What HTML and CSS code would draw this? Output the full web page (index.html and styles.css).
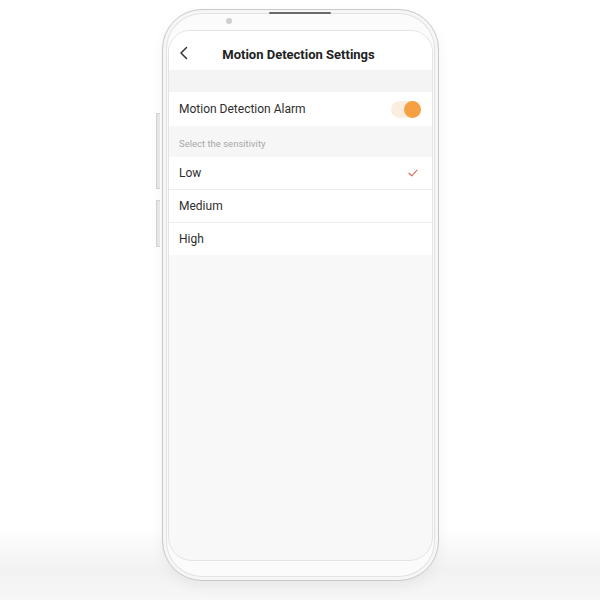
FILE: index.html
```html
<!DOCTYPE html>
<html>
<head>
<meta charset="utf-8">
<link rel="stylesheet" href="styles.css">
</head>
<body>
<div class="stage">
  <div class="phone">
    <span class="side-btn side-btn-1"></span>
    <span class="side-btn side-btn-2"></span>
    <span class="camera"></span>
    <span class="speaker"></span>
    <div class="screen">
      <div class="header">
        <svg class="back" width="10" height="14" viewBox="0 0 10 14"><path d="M7.5 1.5 L2 7 L7.5 12.5" fill="none" stroke="#333" stroke-width="1.5" stroke-linecap="round" stroke-linejoin="round"/></svg>
        <div class="title">Motion Detection Settings</div>
      </div>
      <div class="gap"></div>
      <div class="row alarm">
        <span class="label">Motion Detection Alarm</span>
        <span class="toggle"><span class="knob"></span></span>
      </div>
      <div class="section">Select the sensitivity</div>
      <div class="row opt">
        <span class="label">Low</span>
        <svg class="check" width="10" height="8" viewBox="0 0 10 8"><path d="M1 4.2 L3.8 6.8 L9 1.2" fill="none" stroke="#d9735a" stroke-width="1.2" stroke-linecap="round" stroke-linejoin="round"/></svg>
      </div>
      <div class="row opt">
        <span class="label">Medium</span>
      </div>
      <div class="row opt last">
        <span class="label">High</span>
      </div>
    </div>
  </div>
</div>
</body>
</html>
```

FILE: styles.css
```css
html, body {
  margin: 0;
  padding: 0;
}
body {
  width: 600px;
  height: 600px;
  overflow: hidden;
  font-family: Roboto, "Liberation Sans", sans-serif;
  background: linear-gradient(to bottom, #ffffff 0%, #ffffff 88%, #f2f2f2 95%, #f7f7f7 100%);
}
.stage {
  height: 600px;
  display: flex;
  justify-content: center;
  padding-top: 9px;
  box-sizing: border-box;
}
.phone {
  position: relative;
  width: 277px;
  height: 572px;
  box-sizing: border-box;
  border: 1.5px solid #c9c9c9;
  border-radius: 40px;
  background: #fbfbfb;
  box-shadow: inset 0 0 0 3px #f6f6f6, inset 0 0 0 4px #e2e2e2, 0 6px 14px rgba(0,0,0,0.05);
  padding: 20px 5px 19px 5px;
  margin-left: 1px;
}
.side-btn {
  position: absolute;
  left: -7px;
  width: 3px;
  background: #e6e6e6;
  border: 1px solid #d2d2d2;
  border-right: none;
  border-radius: 1px 0 0 1px;
}
.side-btn-1 { top: 103px; height: 74px; }
.side-btn-2 { top: 190px; height: 45px; }
.camera {
  position: absolute;
  top: 8px;
  left: 63px;
  width: 6px;
  height: 6px;
  border-radius: 50%;
  background: #cfcfcf;
}
.speaker {
  position: absolute;
  top: 2px;
  left: 106px;
  width: 62px;
  height: 2px;
  background: #6a6a6a;
  border-radius: 1px;
}
.screen {
  height: 100%;
  box-sizing: border-box;
  border: 1px solid #e4e4e4;
  border-radius: 22px 22px 24px 24px;
  background: #f8f8f8;
  overflow: hidden;
}
.header {
  height: 39px;
  background: #ffffff;
  display: flex;
  align-items: center;
  position: relative;
  padding-left: 10px;
}
.back {
  margin-top: 4px;
}
.title {
  position: absolute;
  left: 0;
  right: 0;
  top: 16px;
  text-align: center;
  font-size: 13px;
  font-weight: 700;
  color: #222;
  padding-right: 4px;
}
.gap {
  height: 22px;
  background: #f4f4f4;
}
.row {
  background: #fff;
  display: flex;
  align-items: center;
  justify-content: space-between;
  padding: 0 10px 0 10px;
  color: #2e2e2e;
  font-size: 12px;
}
.alarm {
  height: 34px;
}
.toggle {
  width: 30px;
  height: 17px;
  border-radius: 9px;
  background: #fbeedf;
  position: relative;
  margin-right: 1px;
}
.knob {
  position: absolute;
  right: 0;
  top: 0;
  width: 17px;
  height: 17px;
  border-radius: 50%;
  background: #f5a043;
}
.section {
  height: 31px;
  box-sizing: border-box;
  padding: 12px 0 0 10px;
  font-size: 9.5px;
  color: #a8a8a8;
  background: #f6f6f6;
}
.opt {
  height: 32px;
  border-bottom: 1px solid #ededed;
}
.opt.last {
  border-bottom: none;
  height: 32px;
}
.check {
  margin-right: 4px;
}
```
